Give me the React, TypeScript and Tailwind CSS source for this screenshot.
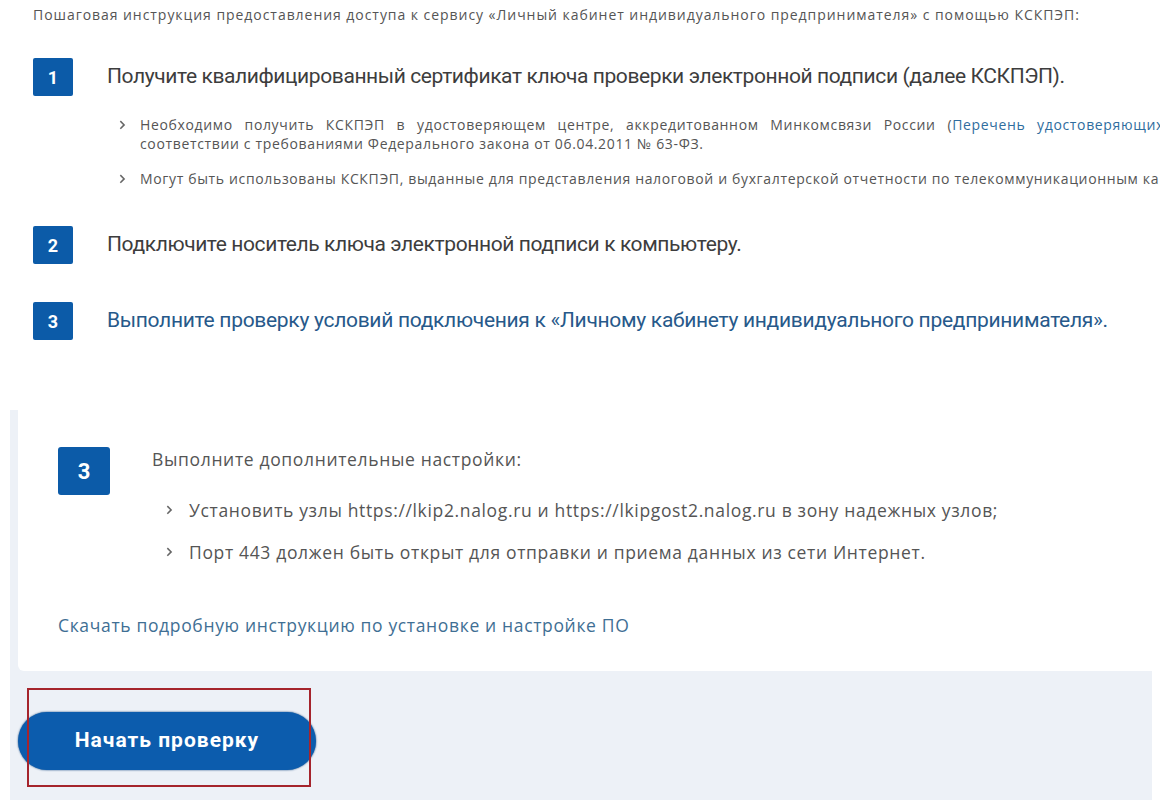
import React from 'react';

const Chevron: React.FC<{ size?: number }> = ({ size = 7 }) => (
    <svg width={size} height={size * 1.4} viewBox="0 0 6 9" fill="none" className="shrink-0">
        <path d="M1 1l3.5 3.5L1 8" stroke="#666" strokeWidth="1.4" />
    </svg>
);

const NumBox: React.FC<{ n: string; big?: boolean }> = ({ n, big }) => (
    <div
        className={
            big
                ? 'w-[52px] h-[48px] shrink-0 rounded-[3px] bg-[#0c5ba8] text-white flex items-center justify-center text-[22px] font-bold font-[Roboto,sans-serif]'
                : 'w-[40px] h-[38px] shrink-0 rounded-[2px] bg-[#0c5ba8] text-white flex items-center justify-center text-[18px] font-bold font-[Roboto,sans-serif]'
        }
    >
        {n}
    </div>
);

const App: React.FC = () => {
    return (
        <div className="w-[1160px] h-[805px] bg-white overflow-hidden relative font-['Open_Sans',sans-serif]">
            {/* upper instruction block */}
            <div className="pl-[33px] pt-[6px] h-[410px]">
                <p className="text-[14px] tracking-[0.95px] text-[#555] leading-[18px] whitespace-nowrap">
                    Пошаговая инструкция предоставления доступа к сервису «Личный кабинет индивидуального предпринимателя» с помощью КСКПЭП:
                </p>

                <div className="mt-[34px] flex items-center gap-[34px]">
                    <NumBox n="1" />
                    <h2 className="font-[Roboto,sans-serif] text-[21px] tracking-[-0.4px] text-[#3d3d3d] whitespace-nowrap">
                        Получите квалифицированный сертификат ключа проверки электронной подписи (далее КСКПЭП).
                    </h2>
                </div>

                <div className="mt-[19px] ml-[86px] text-[14px] tracking-[0.65px] text-[#555] leading-[19px]">
                    <div className="flex items-start gap-[14px]">
                        <div className="pt-[5px]"><Chevron /></div>
                        <div>
                            <div className="w-[1024px] whitespace-nowrap text-justify [text-align-last:justify]">
                                Необходимо получить КСКПЭП в удостоверяющем центре, аккредитованном Минкомсвязи России (<span className="text-[#2f6d9e]">Перечень удостоверяющих</span>
                            </div>
                            <div className="whitespace-nowrap">соответствии с требованиями Федерального закона от 06.04.2011 № 63-ФЗ.</div>
                        </div>
                    </div>
                    <div className="mt-[16px] flex items-start gap-[14px]">
                        <div className="pt-[5px]"><Chevron /></div>
                        <div className="whitespace-nowrap">
                            Могут быть использованы КСКПЭП, выданные для представления налоговой и бухгалтерской отчетности по телекоммуникационным ка
                        </div>
                    </div>
                </div>

                <div className="mt-[38px] flex items-center gap-[34px]">
                    <NumBox n="2" />
                    <h2 className="font-[Roboto,sans-serif] text-[21px] tracking-[-0.4px] text-[#3d3d3d] whitespace-nowrap">
                        Подключите носитель ключа электронной подписи к компьютеру.
                    </h2>
                </div>

                <div className="mt-[38px] flex items-center gap-[34px]">
                    <NumBox n="3" />
                    <h2 className="font-[Roboto,sans-serif] text-[21px] tracking-[-0.3px] text-[#27598a] whitespace-nowrap">
                        Выполните проверку условий подключения к «Личному кабинету индивидуального предпринимателя».
                    </h2>
                </div>
            </div>

            {/* lower panel */}
            <div className="ml-[10px] w-[1142px] h-[390px] bg-[#edf1f7]">
                <div className="ml-[8px] w-[1150px] h-[261px] bg-white rounded-bl-[6px] pl-[40px] pt-[37px]">
                    <div className="flex items-start gap-[42px]">
                        <NumBox n="3" big />
                        <div>
                            <p className="text-[17.5px] tracking-[0.65px] text-[#555] leading-[24px]">Выполните дополнительные настройки:</p>
                            <div className="mt-[27px] ml-[14px] text-[17.5px] tracking-[0.65px] text-[#555] leading-[24px] flex flex-col gap-[18px]">
                                <div className="flex items-center gap-[16px]">
                                    <Chevron />
                                    <span>Установить узлы https://lkip2.nalog.ru и https://lkipgost2.nalog.ru в зону надежных узлов;</span>
                                </div>
                                <div className="flex items-center gap-[16px]">
                                    <Chevron />
                                    <span>Порт 443 должен быть открыт для отправки и приема данных из сети Интернет.</span>
                                </div>
                            </div>
                        </div>
                    </div>
                    <p className="mt-[49px] text-[17.5px] tracking-[0.65px] text-[#3f6f94] leading-[24px]">
                        Скачать подробную инструкцию по установке и настройке ПО
                    </p>
                </div>

                <div className="relative pl-[8px] pt-[41px]">
                    <button className="w-[298px] h-[58px] rounded-full bg-[#0c5cad] text-white text-[21px] tracking-[1px] font-bold font-[Roboto,sans-serif] shadow-[0_0_2px_#0a3f7a]">
                        Начать проверку
                    </button>
                    <div className="absolute left-[17px] top-[17px] w-[284px] h-[99px] border-2 border-[#a5242c]" />
                </div>
            </div>
        </div>
    );
};

export default App;
